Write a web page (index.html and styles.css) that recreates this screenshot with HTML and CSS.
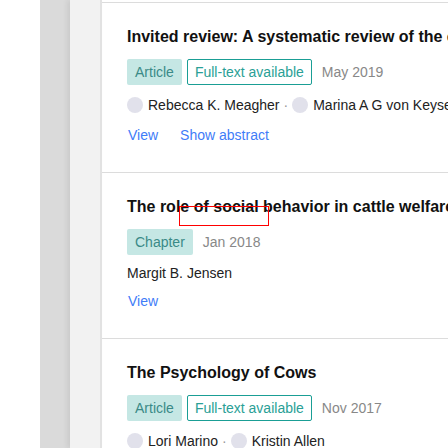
FILE: index.html
```html
<!DOCTYPE html>
<html>
<head>
<meta charset="utf-8">
<link rel="stylesheet" href="styles.css">
</head>
<body>
<div class="layout">
  <div class="gutter"></div>
  <div class="rail"></div>
  <div class="panel"></div>
  <main class="results">
    <section class="item">
      <h3 class="title">Invited review: A systematic review of the effects of social housing on dairy cattle</h3>
      <div class="meta">
        <span class="badge type">Article</span>
        <span class="badge fulltext">Full-text available</span>
        <span class="date">May 2019</span>
      </div>
      <div class="authors with-avatars">
        <span class="avatar"></span><span class="name">Rebecca K. Meagher</span>
        <span class="sep">·</span>
        <span class="avatar"></span><span class="name">Marina A G von Keyserlingk</span>
      </div>
      <div class="actions">
        <a class="link">View</a>
        <a class="link">Show abstract</a>
      </div>
    </section>
    <section class="item">
      <h3 class="title">The role of social behavior in cattle welfare</h3>
      <div class="highlight"></div>
      <div class="meta">
        <span class="badge type">Chapter</span>
        <span class="date">Jan 2018</span>
      </div>
      <div class="authors">
        <span class="name">Margit B. Jensen</span>
      </div>
      <div class="actions">
        <a class="link">View</a>
      </div>
    </section>
    <section class="item">
      <h3 class="title">The Psychology of Cows</h3>
      <div class="meta">
        <span class="badge type">Article</span>
        <span class="badge fulltext">Full-text available</span>
        <span class="date">Nov 2017</span>
      </div>
      <div class="authors with-avatars">
        <span class="avatar"></span><span class="name">Lori Marino</span>
        <span class="sep">·</span>
        <span class="avatar"></span><span class="name">Kristin Allen</span>
      </div>
      <div class="actions">
        <a class="link">View</a>
      </div>
    </section>
  </main>
</div>
</body>
</html>
```
FILE: styles.css
```css
html, body {
  margin: 0;
  padding: 0;
  background: #fff;
  width: 448px;
  height: 448px;
  overflow: hidden;
}
body {
  font-family: "Liberation Sans", Arial, sans-serif;
}
.layout {
  display: flex;
  height: 448px;
  overflow: hidden;
}
.gutter {
  flex: 0 0 40px;
  background: #fff;
}
.rail {
  flex: 0 0 30px;
  background: #dadada;
}
.panel {
  flex: 0 0 30px;
  background: #f2f2f2;
  border-right: 2px solid #e2e2e2;
  box-shadow: -3px 0 5px rgba(0, 0, 0, 0.07);
}
.results {
  flex: 1 1 auto;
  min-width: 0;
  padding-top: 2px;
}
.item {
  position: relative;
  border-top: 1px solid #dcdcdc;
  padding: 24px 0 27px 25px;
}
.title {
  margin: 0;
  font-size: 16px;
  line-height: 20px;
  font-weight: bold;
  color: #111;
  white-space: nowrap;
}
.meta {
  display: flex;
  align-items: center;
  margin-top: 12px;
  height: 26px;
  font-size: 14px;
}
.badge {
  box-sizing: border-box;
  height: 26px;
  line-height: 26px;
  border-radius: 2px;
  white-space: nowrap;
}
.badge.type {
  background: #c5e7e4;
  color: #3a8a87;
  padding: 0 8px;
  margin-right: 5px;
}
.badge.fulltext {
  border: 1px solid #1a9e95;
  color: #2aa096;
  line-height: 24px;
  padding: 0 7px;
  margin-right: 5px;
}
.date {
  color: #888;
  margin-left: 5px;
  white-space: nowrap;
}
.authors {
  display: flex;
  align-items: center;
  margin-top: 8px;
  height: 20px;
  font-size: 14px;
  line-height: 20px;
  color: #222;
  white-space: nowrap;
}
.authors.with-avatars {
  height: 24px;
  margin-bottom: 8px;
}
.avatar {
  flex: 0 0 16px;
  width: 16px;
  height: 16px;
  border-radius: 50%;
  background: #e1e1eb;
  margin-right: 5px;
}
.sep {
  color: #999;
  margin: 0 4px 0 4px;
}
.actions {
  display: flex;
  gap: 22px;
  margin-top: 8px;
  padding-left: 1px;
  font-size: 14px;
  line-height: 20px;
}
.link {
  color: #3f7cf8;
  text-decoration: none;
}
.highlight {
  position: absolute;
  left: 77px;
  top: 33px;
  width: 90px;
  height: 20px;
  box-sizing: border-box;
  border: 1px solid #ff0000;
}
```
